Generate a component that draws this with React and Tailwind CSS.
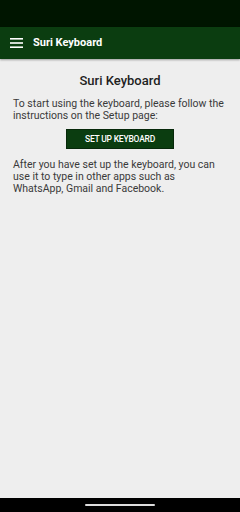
import React from 'react';

const App = () => {
  return (
    <div className="w-[240px] h-[512px] flex flex-col bg-[#eeeeee] font-['Roboto',sans-serif] overflow-hidden">
      <div className="h-[27px] bg-[#001500]"></div>
      <header className="h-[32px] bg-[#0b3d10] flex items-center pl-[10px] shadow-[0_1px_2px_rgba(0,0,0,0.35)] z-10">
        <svg width="13" height="10" viewBox="0 0 13 10" className="text-white">
          <rect x="0" y="0" width="13" height="1.6" fill="currentColor" />
          <rect x="0" y="4.2" width="13" height="1.6" fill="currentColor" />
          <rect x="0" y="8.4" width="13" height="1.6" fill="currentColor" />
        </svg>
        <span className="ml-[10px] text-white text-[11px] font-bold">Suri Keyboard</span>
      </header>
      <main className="flex-1 flex flex-col px-[13px] pt-[13px] text-[#3a3a3a]">
        <h1 className="text-center text-[13px] font-medium text-[#1e1e1e] leading-[18px]">Suri Keyboard</h1>
        <p className="mt-[8px] text-[10.5px] leading-[12px]">
          To start using the keyboard, please follow the instructions on the Setup page:
        </p>
        <div className="flex justify-center mt-[7px]">
          <button className="w-[108px] h-[20px] bg-[#0b3d10] border border-[#06280a] text-white text-[8.5px] font-medium tracking-tight uppercase">
            Set up keyboard
          </button>
        </div>
        <p className="mt-[10px] text-[10.5px] leading-[12px]">
          After you have set up the keyboard, you can use it to type in other apps such as WhatsApp, Gmail and Facebook.
        </p>
      </main>
      <div className="h-[14px] bg-black flex items-center justify-center">
        <div className="w-[70px] h-[2px] bg-[#dddddd] rounded-full"></div>
      </div>
    </div>
  );
};

export default App;
